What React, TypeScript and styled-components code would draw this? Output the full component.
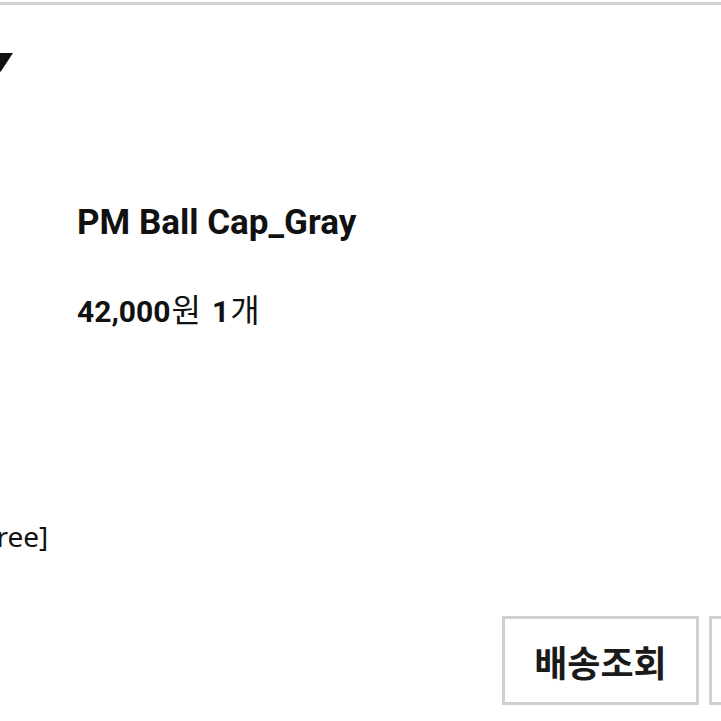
import React from 'react'
import styled, { createGlobalStyle } from 'styled-components'

const GlobalStyle = createGlobalStyle`
  html, body {
    margin: 0;
    padding: 0;
    background: #ffffff;
    overflow: hidden;
  }
  body {
    font-family: Roboto, 'Noto Sans CJK KR', sans-serif;
    color: #111111;
  }
`

const Page = styled.div`
  width: 721px;
  height: 721px;
  display: flex;
  flex-direction: column;
`

const TopRule = styled.div`
  margin-top: 2px;
  height: 3px;
  background: #d2d2d2;
`

const SectionHead = styled.div`
  display: flex;
  align-items: center;
  height: 20px;
  margin-top: 47px;
  margin-left: -12px;
`

const Caret = styled.svg`
  width: 25px;
  height: 19px;
  display: block;
`

const Product = styled.div`
  display: flex;
  flex-direction: column;
  padding-left: 77px;
  margin-top: 129px;
`

const ProductName = styled.div`
  font-family: Roboto, 'Noto Sans CJK KR', sans-serif;
  font-weight: 700;
  font-size: 35px;
  line-height: 44px;
`

const PriceLine = styled.div`
  display: flex;
  align-items: baseline;
  margin-top: 44px;
  line-height: 38px;
`

const Strong = styled.span`
  font-family: Roboto, sans-serif;
  font-weight: 700;
  font-size: 30px;
`

const Unit = styled.span<{ $gap?: number }>`
  font-family: 'Noto Sans CJK KR', sans-serif;
  font-weight: 400;
  font-size: 32px;
  margin-left: 1px;
  margin-right: ${({ $gap }) => $gap || 0}px;
`

const OptionLine = styled.div`
  margin-top: 187px;
  margin-left: -18px;
  font-family: 'Noto Sans', 'Noto Sans CJK KR', sans-serif;
  font-size: 28px;
  line-height: 36px;
  white-space: nowrap;
`

const ButtonRow = styled.div`
  display: flex;
  gap: 10px;
  padding-left: 502px;
  margin-top: 62px;
`

const ActionButton = styled.button`
  flex-shrink: 0;
  width: 197px;
  height: 89px;
  box-sizing: border-box;
  border: 3px solid #cfcfcf;
  background: #ffffff;
  font-family: 'Noto Sans CJK KR', sans-serif;
  font-weight: 700;
  font-size: 36px;
  color: #1a1a1a;
  padding: 0;
`

export default function App() {
  return (
    <Page>
      <GlobalStyle />
      <TopRule />
      <SectionHead>
        <Caret viewBox="0 0 25 19">
          <polygon points="0,0 25,0 12.5,19" fill="#111" />
        </Caret>
      </SectionHead>
      <Product>
        <ProductName>PM Ball Cap_Gray</ProductName>
        <PriceLine>
          <Strong>42,000</Strong>
          <Unit $gap={11}>원</Unit>
          <Strong>1</Strong>
          <Unit>개</Unit>
        </PriceLine>
      </Product>
      <OptionLine>Free]</OptionLine>
      <ButtonRow>
        <ActionButton>배송조회</ActionButton>
        <ActionButton>구매확정</ActionButton>
      </ButtonRow>
    </Page>
  )
}
